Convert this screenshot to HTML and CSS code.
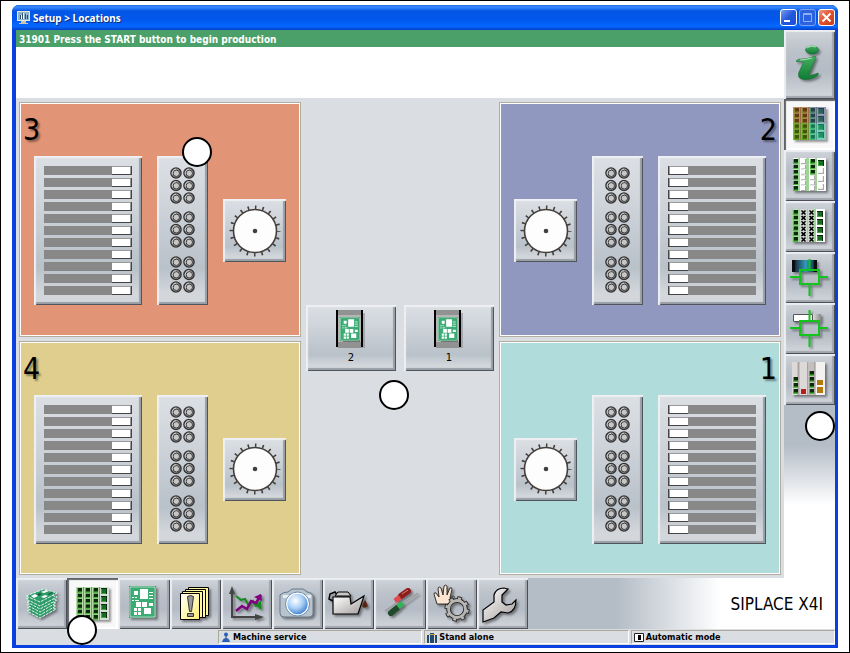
FILE: index.html
```
<!DOCTYPE html>
<html lang="en">
<head>
  <meta charset="UTF-8">
  <meta name="viewport" content="width=device-width, initial-scale=1.0">
  <title>Setup &gt; Locations</title>
  <link rel="stylesheet" href="styles.css">
</head>
<body>
  <!-- Shared drawings -->
  <svg class="defs" aria-hidden="true">
    <defs>
      <linearGradient id="metal" x1="0" y1="0" x2="1" y2="1">
        <stop offset="0" stop-color="#fff"/><stop offset="1" stop-color="#a59d9d"/>
      </linearGradient>
      <linearGradient id="teal" x1="0" x2="1">
        <stop offset="0.1" stop-color="#0a0e12"/><stop offset="0.15" stop-color="#1c3444"/><stop offset="0.55" stop-color="#2f9cc0"/><stop offset="0.85" stop-color="#1c4454"/><stop offset="0.9" stop-color="#0a0e12"/>
      </linearGradient>
      <linearGradient id="slot" x1="0" x2="1">
        <stop offset="0.6" stop-color="#fff"/><stop offset="1" stop-color="#888"/>
      </linearGradient>
      <linearGradient id="warn" x1="0" y1="0" x2="1" y2="1">
        <stop offset="0" stop-color="#fff"/><stop offset="1" stop-color="#ffef70"/>
      </linearGradient>
      <linearGradient id="green" x1="0" y1="0" x2="0" y2="1">
        <stop offset="0" stop-color="#45b060"/><stop offset="1" stop-color="#0f7a35"/>
      </linearGradient>
      <radialGradient id="lens" cx="0.4" cy="0.35" r="0.7">
        <stop offset="0" stop-color="#fff"/><stop offset="0.5" stop-color="#a9cff5"/><stop offset="1" stop-color="#2f74c8"/>
      </radialGradient>

      <symbol id="bar" viewBox="0 0 88 9">
        <path fill="#888" d="M0 0h88v9H0z"/>
        <path fill="#444" d="M68 0h20v9H68z"/>
        <path fill="#999" d="M68 0h19v8H68z"/>
        <path fill="#fff" d="M68 1h18v7H68z"/>
      </symbol>
      <symbol id="feeders" viewBox="0 0 88 129">
        <use href="#bar" width="88" height="9"/>
        <use href="#bar" width="88" height="9" y="12"/>
        <use href="#bar" width="88" height="9" y="24"/>
        <use href="#bar" width="88" height="9" y="36"/>
        <use href="#bar" width="88" height="9" y="48"/>
        <use href="#bar" width="88" height="9" y="60"/>
        <use href="#bar" width="88" height="9" y="72"/>
        <use href="#bar" width="88" height="9" y="84"/>
        <use href="#bar" width="88" height="9" y="96"/>
        <use href="#bar" width="88" height="9" y="108"/>
        <use href="#bar" width="88" height="9" y="120"/>
      </symbol>

      <symbol id="ring" viewBox="0 0 12 12">
        <circle cx="6" cy="6" r="5.100" fill="#999" stroke="#333" stroke-width="1.400"/>
        <circle cx="6.300" cy="6.300" r="3.200" fill="#c6c6c6" stroke="#3c3c3c"/>
        <path d="M2.400 7.500A4 4 0 0 1 6 2.200" fill="none" stroke="#ddd" stroke-width="0.800"/>
      </symbol>
      <symbol id="rings" viewBox="0 0 25 37">
        <use href="#ring" width="12" height="12"/>
        <use href="#ring" width="12" height="12" x="13"/>
        <use href="#ring" width="12" height="12" y="12.500"/>
        <use href="#ring" width="12" height="12" x="13" y="12.500"/>
        <use href="#ring" width="12" height="12" y="25"/>
        <use href="#ring" width="12" height="12" x="13" y="25"/>
      </symbol>
      <symbol id="nozzles" viewBox="0 0 25 127">
        <use href="#rings" width="25" height="37"/>
        <use href="#rings" width="25" height="37" y="44"/>
        <use href="#rings" width="25" height="37" y="89"/>
      </symbol>

      <symbol id="wheel" viewBox="0 0 52 52">
        <circle cx="26" cy="26" r="23.500" fill="none" stroke="#453f3c" stroke-width="4" stroke-dasharray="1.500 5.883" stroke-dashoffset="0.750"/>
        <circle cx="26" cy="26" r="21.500" fill="#fdfdfd" stroke="#453f3c" stroke-width="1.600"/>
        <circle cx="26" cy="26" r="2.300" fill="#453f3c"/>
      </symbol>

      <symbol id="board" viewBox="0 0 27 32">
        <path fill="#1f9058" d="M0 0h27v32H0z"/>
        <path fill="none" stroke="#c9eeda" d="M1 1h25v30H1z"/>
        <path fill="#3aac74" d="M2 2h23v28H2z"/>
        <path fill="#fff" d="M11 3h8v10h-8zM5 5h4v4H5zM7 16h5v5H7zM13 16h5v5h-5zM20 17h4v3h-4zM15 22h7v6h-7zM5 22h3v3H5zM9 22h3v3H9zM5 26h3v3H5zM9 26h3v3H9z"/>
        <path stroke="#fff" d="M20 6.500h4M20 9.500h4M20 12.500h4M3 11.500h2M6 11.500h2M3 14.500h2M6 14.500h4"/>
      </symbol>
      <symbol id="conveyor" viewBox="0 0 31 38">
        <path fill="#8a8d92" opacity="0.600" d="M23 3h6v35h-6z"/>
        <path fill="#929292" d="M2 0h23v38H2z"/>
        <path fill="#b5b5b5" d="M2 5h23v27H2z"/>
        <path fill="#333" opacity="0.500" d="M7 8h17v24H7z"/>
        <use href="#board" x="4" y="7" width="20" height="24"/>
        <path fill="#000" d="M0 0h2v37H0zM25 0h2v37h-2z"/>
      </symbol>

      <!-- Small and large component squares of the location grids -->
      <symbol id="s" viewBox="0 0 5 5">
        <path fill="#4fb83c" d="M0 0h5v5H0z"/><path fill="#0b2a0b" d="M1 0h4v3.500H1z"/>
      </symbol>
      <symbol id="b" viewBox="0 0 6 6">
        <path fill="#0a2a0c" d="M0 0h6v6H0z"/><path fill="#3fa93f" d="M0 1h5v5H0z"/><path fill="#176b22" d="M1 1h4v4H1z"/>
      </symbol>
      <symbol id="e" viewBox="0 0 5 5">
        <path fill="#aaa" d="M0 0h5v5H0z"/><path fill="#fff" d="M0 0h4v4H0z"/>
      </symbol>
      <symbol id="x" viewBox="0 0 5 5">
        <path stroke="#000" stroke-width="1.500" d="M.5 .5l4 4M4.500 .5l-4 4"/>
      </symbol>
      <symbol id="scol" viewBox="0 0 5 32">
        <use href="#s" width="5" height="5"/><use href="#s" width="5" height="5" y="5.400"/><use href="#s" width="5" height="5" y="10.800"/>
        <use href="#s" width="5" height="5" y="16.200"/><use href="#s" width="5" height="5" y="21.600"/><use href="#s" width="5" height="5" y="27"/>
      </symbol>
      <symbol id="ecol" viewBox="0 0 5 32">
        <use href="#e" width="5" height="5"/><use href="#e" width="5" height="5" y="5.400"/><use href="#e" width="5" height="5" y="10.800"/>
        <use href="#e" width="5" height="5" y="16.200"/><use href="#e" width="5" height="5" y="21.600"/><use href="#e" width="5" height="5" y="27"/>
      </symbol>
      <symbol id="xcol" viewBox="0 0 5 32">
        <use href="#x" width="5" height="5"/><use href="#x" width="5" height="5" y="5.400"/><use href="#x" width="5" height="5" y="10.800"/>
        <use href="#x" width="5" height="5" y="16.200"/><use href="#x" width="5" height="5" y="21.600"/><use href="#x" width="5" height="5" y="27"/>
      </symbol>
      <symbol id="bcol" viewBox="0 0 6 32">
        <use href="#b" width="6" height="6" y="1"/><use href="#b" width="6" height="6" y="9"/>
        <use href="#b" width="6" height="6" y="17"/><use href="#b" width="6" height="6" y="25"/>
      </symbol>
      <symbol id="grid" viewBox="0 0 33 33">
        <path fill="#b4d8a8" d="M0 0h33v33H0z"/>
        <path fill="#d8dcd8" d="M24 0h9v33h-9z"/>
        <path stroke="#7c927c" d="M7.500 0v33M15.500 0v33M23.500 0v33"/>
        <use href="#scol" x="1" y="1" width="5" height="32"/>
        <use href="#scol" x="9" y="1" width="5" height="32"/>
        <use href="#scol" x="17" y="1" width="5" height="32"/>
        <use href="#bcol" x="25" width="6" height="32"/>
      </symbol>
      <symbol id="target" viewBox="0 0 38 38">
        <path fill="none" stroke="#12c41c" stroke-width="2" d="M10 11h19v14H10zM19.500 0v11M19.500 25v12M0 18h10M29 18h9"/>
      </symbol>
    </defs>
  </svg>

  <div class="window">
    <header class="titlebar">
      <svg class="app-icon" viewBox="0 0 14 14" aria-hidden="true">
        <path fill="#e8e6dc" d="M0 0h13v10H0z"/>
        <path fill="#8fb4c8" d="M1 1h11v8H1z"/>
        <path fill="#2c4f78" d="M3 4h1v4H3zM5 2h1v6H5zM8 3h1v5H8zM10 4h1v4h-1z"/>
        <path fill="#fff" d="M4 4h1v4H4zM6 2h1v6H6z"/>
        <path fill="#c9c5b8" d="M4 10h5v2H4zM2 12h9v1H2z"/>
      </svg>
      <h1>Setup &gt; Locations</h1>
      <button class="win-button" aria-label="Minimize">
        <svg viewBox="0 0 15 15"><path fill="#fff" d="M3 10h6v2H3z"/></svg>
      </button>
      <button class="win-button dim" aria-label="Maximize">
        <svg viewBox="0 0 15 15"><path fill="none" stroke="#8fb0f4" d="M3.500 3.500h8v8h-8zM3 4.500h9"/></svg>
      </button>
      <button class="win-button close" aria-label="Close">
        <svg viewBox="0 0 15 15"><path stroke="#fff" stroke-width="2" d="M3.500 3.500l8 8M11.500 3.500l-8 8"/></svg>
      </button>
    </header>

    <div class="workspace">
      <div class="content">
        <p class="message">31901 Press the START button to begin production</p>
        <div class="message-space"></div>

        <main class="locations">
          <section class="location loc-3">
            <h2>3</h2>
            <div class="devices">
              <button class="bevel feeder-table" aria-label="Feeders, location 3"><svg><use href="#feeders"/></svg></button>
              <button class="bevel nozzle-changer" aria-label="Nozzle changer, location 3"><svg><use href="#nozzles"/></svg><span class="callout on-nozzles"></span></button>
              <button class="bevel head" aria-label="Placement head, location 3"><svg><use href="#wheel"/></svg></button>
            </div>
          </section>

          <div class="conveyors">
            <button class="bevel conveyor"><svg><use href="#conveyor"/></svg>2</button>
            <button class="bevel conveyor"><svg><use href="#conveyor"/></svg>1</button>
            <span class="callout on-conveyors"></span>
          </div>

          <section class="location right loc-2">
            <h2>2</h2>
            <div class="devices">
              <button class="bevel feeder-table" aria-label="Feeders, location 2"><svg><use href="#feeders"/></svg></button>
              <button class="bevel nozzle-changer" aria-label="Nozzle changer, location 2"><svg><use href="#nozzles"/></svg></button>
              <button class="bevel head" aria-label="Placement head, location 2"><svg><use href="#wheel"/></svg></button>
            </div>
          </section>

          <section class="location loc-4">
            <h2>4</h2>
            <div class="devices">
              <button class="bevel feeder-table" aria-label="Feeders, location 4"><svg><use href="#feeders"/></svg></button>
              <button class="bevel nozzle-changer" aria-label="Nozzle changer, location 4"><svg><use href="#nozzles"/></svg></button>
              <button class="bevel head" aria-label="Placement head, location 4"><svg><use href="#wheel"/></svg></button>
            </div>
          </section>

          <section class="location right loc-1">
            <h2>1</h2>
            <div class="devices">
              <button class="bevel feeder-table" aria-label="Feeders, location 1"><svg><use href="#feeders"/></svg></button>
              <button class="bevel nozzle-changer" aria-label="Nozzle changer, location 1"><svg><use href="#nozzles"/></svg></button>
              <button class="bevel head" aria-label="Placement head, location 1"><svg><use href="#wheel"/></svg></button>
            </div>
          </section>
        </main>
      </div>

      <aside class="sidebar">
        <button class="tool info" aria-label="Information">
          <svg viewBox="0 0 51 69">
            <g fill="url(#green)" stroke="#0c6a2c" stroke-width="0.500">
              <ellipse cx="28" cy="20" rx="6.500" ry="4"/>
              <path d="M12 31c1-1 2-2 5-2 5 0 9-1 14-3l1 1-6 15c-1 3 0 4 2 3l6-2c1 1 0 2-1 3-4 3-10 4-15 3-4-1-4-4-3-7l4-9c0-2-1-2-6-1z"/>
            </g>
            <path d="M23 18c2-2 6-2 9-1M16 30c4 0 8-1 12-2" fill="none" stroke="#9fdcae" stroke-width="1.200"/>
          </svg>
        </button>
        <button class="tool active" aria-label="All locations">
          <svg viewBox="0 0 51 51">
            <use href="#grid" x="9" y="8" width="33" height="33"/>
            <g opacity="0.500">
              <path fill="#c2481c" d="M9 8h16v16H9z"/><path fill="#4a5494" d="M25 8h17v16H25z"/>
              <path fill="#788000" d="M9 24h16v17H9z"/><path fill="#2cb8a8" d="M25 24h17v17H25z"/>
            </g>
          </svg>
        </button>
        <button class="tool" aria-label="Free tracks">
          <svg viewBox="0 0 51 51">
            <path fill="#fff" d="M9 8h33v33H9z"/>
            <path fill="#9fd39a" d="M14 8h2v33h-2zM22 8h3v33h-3zM31 8h2v33h-2z"/>
            <use href="#scol" x="9" y="9" width="5" height="32"/>
            <use href="#ecol" x="17" y="9" width="5" height="32"/>
            <use href="#ecol" x="26" y="9" width="5" height="32"/>
            <use href="#s" x="26" y="9" width="5" height="5"/>
            <use href="#s" x="26" y="14.400" width="5" height="5"/>
            <use href="#s" x="26" y="19.800" width="5" height="5"/>
            <use href="#b" x="34" y="10" width="6" height="6"/>
            <use href="#e" x="34" y="18" width="6" height="6"/>
            <use href="#e" x="34" y="26" width="6" height="6"/>
            <use href="#e" x="34" y="34" width="6" height="6"/>
          </svg>
        </button>
        <button class="tool" aria-label="Disabled tracks">
          <svg viewBox="0 0 51 51">
            <path fill="#d0d6d0" d="M8 8h33v33H8z"/>
            <path fill="#fff" d="M32 8h9v33h-9z"/>
            <path fill="#9fd39a" d="M8 8h1v33H8zM14 8h2v33h-2zM23 8h1v33h-1zM30 8h2v33h-2z"/>
            <use href="#scol" x="9" y="9" width="5" height="32"/>
            <use href="#xcol" x="17" y="9" width="5" height="32"/>
            <use href="#xcol" x="25" y="9" width="5" height="32"/>
            <use href="#bcol" x="33" y="9" width="6" height="32"/>
          </svg>
        </button>
        <button class="tool" aria-label="Component position">
          <svg viewBox="0 0 51 51">
            <path fill="url(#teal)" d="M8 8h25v12H8z"/>
            <use href="#target" x="6" y="7" width="38" height="38"/>
          </svg>
        </button>
        <button class="tool" aria-label="Track position">
          <svg viewBox="0 0 51 51">
            <path fill="url(#slot)" d="M9 11h28v8H9z"/>
            <path fill="none" stroke="#555" d="M9.500 11.500h19v7h-19z"/>
            <use href="#target" x="6" y="7" width="38" height="38"/>
          </svg>
        </button>
        <button class="tool" aria-label="Fill levels">
          <svg viewBox="0 0 51 51">
            <path fill="#c4bfbe" d="M8 8h33v33H8z"/>
            <path fill="#dcd9d8" d="M8 8h5v33H8zM16 8h7v33h-7z"/>
            <path fill="#f4f2f0" d="M32 8h9v33h-9z"/>
            <path fill="#a9a3a2" d="M14 8h1v33h-1zM23 8h1v33h-1zM30 8h1v33h-1z"/>
            <use href="#s" x="9" y="23" width="5" height="5"/><use href="#s" x="9" y="29" width="5" height="5"/><use href="#s" x="9" y="35" width="5" height="5"/>
            <path fill="#b91c1c" d="M17 35h5v5h-5z"/>
            <use href="#s" x="25" y="17" width="5" height="5"/><use href="#s" x="25" y="23" width="5" height="5"/><use href="#s" x="25" y="29" width="5" height="5"/><use href="#s" x="25" y="35" width="5" height="5"/>
            <path fill="#b57a0c" d="M33 26h6v5h-6zM33 33h6v6h-6z"/>
          </svg>
        </button>
        <span class="callout on-sidebar"></span>
      </aside>
    </div>

    <footer>
      <nav class="toolbar">
        <div class="tools">
          <button class="tool" aria-label="Boards">
            <svg viewBox="0 0 51 51">
              <g fill="#2f9b6b" stroke="#dff3e8" stroke-dasharray="3 1">
                <path d="M11 33l16-7 13 5-16 9z"/>
                <path d="M11 30l16-7 13 5-16 9z"/>
                <path d="M11 27l16-7 13 5-16 9z"/>
                <path d="M11 24l16-7 14 5-17 9z"/>
                <path d="M10 21l17-7 14 5-17 9z"/>
                <path d="M10 18l18-7 13 4-17 9z"/>
              </g>
              <path fill="#fff" d="M25 14l5-2 3 1-5 2zM15 18l4-2 3 2-4 2zM25 19l4-2 3 1-4 2z"/>
              <path fill="#14603c" d="M21 16l3-1 2 1-3 2zM32 16l4-2 1 1-4 2z"/>
            </svg>
          </button>
          <button class="tool active" aria-label="Locations">
            <svg viewBox="0 0 51 51"><use href="#grid" x="9" y="9" width="33" height="33"/></svg>
            <span class="callout on-tool"></span>
          </button>
          <button class="tool" aria-label="Board">
            <svg viewBox="0 0 51 51"><use href="#board" x="11" y="8" width="27" height="32"/></svg>
          </button>
          <button class="tool" aria-label="Messages">
            <svg viewBox="0 0 51 51">
              <path fill="#fff6a0" stroke="#000" d="M18.500 9.500h20v28h-20z"/>
              <path fill="#fff6a0" stroke="#000" d="M15.500 11.500h20v28h-20z"/>
              <path fill="#fff6a0" stroke="#000" d="M12.500 13.500h20v26h-20z"/>
              <path fill="url(#warn)" stroke="#000" d="M10.500 15.500h19v26h-19z"/>
              <path fill="#9a9a9a" stroke="#333" d="M17.500 18.500q3-2 6 0l-2 15h-2zM17.500 35.500h6v3h-6z"/>
            </svg>
          </button>
          <button class="tool" aria-label="Statistics">
            <svg viewBox="0 0 51 51">
              <path fill="none" stroke="#444" stroke-width="2" d="M11 14v25h26"/>
              <path fill="#444" d="M11 8l3 8H8zM43 39l-9-3v6z"/>
              <path fill="none" stroke="#168a1c" stroke-width="2" d="M15 18l5 4 4-1 4 7 4-5 3 5 5-1"/>
              <path fill="#168a1c" d="M34 26l6-3v9z"/>
              <path fill="none" stroke="#800080" stroke-width="2.500" d="M15 33l6-5 5 3 4-8 5 2 5-8"/>
              <path fill="#800080" d="M33 19l7-3 1 7z"/>
            </svg>
          </button>
          <button class="tool" aria-label="Vision">
            <svg viewBox="0 0 51 51">
              <path fill="#b9c3ce" stroke="#66788a" d="M8 17q3-3 8-3l4-3h11l4 3q5 0 6 4v18q-1 3-4 3H12q-4 0-4-4z"/>
              <path fill="#e8edf2" d="M11 17h7l3-3h9l3 3h6v3H11z"/>
              <circle cx="25.500" cy="26" r="11" fill="url(#lens)" stroke="#fff" stroke-width="1.500"/>
              <circle cx="25.500" cy="26" r="12" fill="none" stroke="#6d8fb5"/>
            </svg>
          </button>
          <button class="tool" aria-label="Maintenance">
            <svg viewBox="0 0 51 51">
              <path fill="none" stroke="#000" stroke-width="1.500" d="M10 23l-4-2 1-5 5-2 3 4"/>
              <path fill="#c8c8c8" stroke="#000" d="M12 18l3-4h10l3 4z"/>
              <path fill="url(#metal)" stroke="#000" stroke-width="1.200" d="M10 19h17l1 7 13-8-6 18H10z"/>
              <path fill="#5a2413" d="M42 22q4 6 2 7-4 2-5-1 1-3 3-6z"/>
            </svg>
          </button>
          <button class="tool" aria-label="Service tools">
            <svg viewBox="0 0 51 51">
              <path stroke="#999" stroke-width="1.500" d="M11 33l13-9M29 26l15-11"/>
              <path stroke="#8e1d1d" stroke-width="6" stroke-linecap="round" d="M27 18l7-5"/>
              <path stroke="#e04a4a" stroke-width="5" d="M21 23l5-4"/>
              <path stroke="#1e4a2a" stroke-width="6" stroke-linecap="round" d="M17 35l6-5"/>
              <path stroke="#35b35a" stroke-width="5" d="M24 29l5-4"/>
              <path stroke="#d98080" d="M28 16l6-4"/>
            </svg>
          </button>
          <button class="tool" aria-label="Manual functions">
            <svg viewBox="0 0 51 51">
              <path fill="#fbe5d0" stroke="#222" stroke-width="0.900" d="M11 26l-3-10q0-2 2-1l3 4-1-9q1-2 3 0l2 7 1-9q2-2 3 0v9l3-7q2-1 2 1l-2 9 3-2q2 0 1 2l-6 6z"/>
              <circle cx="31" cy="31" r="10.400" fill="none" stroke="#222" stroke-width="4.500" stroke-dasharray="4.200 3.970"/>
              <circle cx="31" cy="31" r="8.500" fill="none" stroke="#222" stroke-width="4.500"/>
              <circle cx="31" cy="31" r="10" fill="none" stroke="#b9b5b3" stroke-width="3.500" stroke-dasharray="2.800 5.054" stroke-dashoffset="-0.700"/>
              <circle cx="31" cy="31" r="8.500" fill="none" stroke="#b9b5b3" stroke-width="2.800"/>
            </svg>
          </button>
          <button class="tool" aria-label="Options">
            <svg viewBox="0 0 51 51">
              <path fill="url(#metal)" stroke="#000" stroke-width="1.200" d="M6 44V32l11-8V17q2-7 10-7l4 1-6 6v7l4 3 6-1 4-4q0 11-8 13l-7-1-7 6z"/>
            </svg>
          </button>
        </div>
        <div class="machine-name">SIPLACE X4I</div>
      </nav>

      <div class="statusbar">
        <div class="status-cell">
          <svg viewBox="0 0 10 11"><circle cx="5" cy="2.500" r="2" fill="#2c5fb8"/><path stroke="#345" d="M5 4v4"/><path fill="#2c5fb8" d="M1 10q1-4 4-4t4 4z"/></svg>
          Machine service
        </div>
        <div class="status-cell">
          <svg viewBox="0 0 10 11"><path fill="#234a6b" d="M0 3h2v8H0zM3 1h4v10H3zM8 3h2v8H8z"/><path fill="#d8a640" d="M2 2h6v1H2z"/></svg>
          Stand alone
        </div>
        <div class="status-cell">
          <svg viewBox="0 0 10 11"><path fill="#fff" stroke="#222" d="M.5 1.500h9v8h-9z"/><path fill="#000" d="M4 3h3v5H4z"/></svg>
          Automatic mode
        </div>
      </div>
    </footer>
  </div>
</body>
</html>
```
FILE: styles.css
```
/* Base */
* {
  box-sizing: border-box;
}

body, h1, h2, p {
  margin: 0;
}

body {
  min-height: 100vh;
  display: flex;
  padding: 4px 11px;
  border: 1px solid #000;
  background: #fff;
  color: #000;
  font-family: "DejaVu Sans Condensed", "DejaVu Sans", Verdana, sans-serif;
  font-size: 10px;
}

button {
  position: relative;
  margin: 0;
  padding: 0;
  border: none;
  color: inherit;
  font: inherit;
}

svg {
  display: block;
}

.defs {
  position: absolute;
  width: 0;
  height: 0;
}

/* Window */
.window {
  flex: 1;
  display: flex;
  flex-direction: column;
  border: solid #0a3fe0;
  border-width: 0 3px 3px 4px;
  border-radius: 7px 7px 0 0;
  background: #0a3fe0;
}

.titlebar {
  display: flex;
  align-items: center;
  gap: 2px;
  height: 25px;
  margin: 0 -3px 0 -4px;
  padding: 0 3px 0 5px;
  border-radius: 7px 7px 0 0;
  background: linear-gradient(#2a6ad8, #3a8cff 2px, #0455e4 6px, #0258ee 60%, #0668ff 85%, #0340cc);
}

.app-icon {
  width: 14px;
  height: 14px;
}

.titlebar h1 {
  flex: 1;
  color: #fff;
  font-family: "Noto Sans", "Open Sans", sans-serif;
  font-size: 10px;
  text-shadow: 1px 1px 0 #0a2a80;
}

.win-button {
  width: 17px;
  height: 17px;
  border: 1px solid #fff;
  border-radius: 3px;
  background: linear-gradient(135deg, #7a9df0, #2458dc 50%, #1c4fd8);
}

.win-button svg {
  width: 15px;
  height: 15px;
}

.win-button.dim {
  border-color: #7fa0ee;
  background: #2a62e0;
}

.win-button.close {
  background: linear-gradient(135deg, #f09a80, #e0502c 50%, #c83c14);
}

/* Main area */
.workspace {
  flex: 1;
  display: grid;
  grid-template-columns: 1fr 51px;
  background: #dadde2;
}

.content {
  display: flex;
  flex-direction: column;
}

.message {
  height: 17px;
  padding-left: 3px;
  background: #4b9f68;
  color: #fff;
  font-weight: bold;
  line-height: 19px;
}

.message-space {
  height: 51px;
  background: #fff;
}

.locations {
  flex: 1;
  display: grid;
  grid-template-columns: 282fr 198fr 282fr;
  grid-template-rows: 1fr 1fr;
  row-gap: 4px;
  padding: 4px 3px 3px;
}

.location {
  border: 1px solid #b3ad9f;
  box-shadow: inset 0 0 0 1px #fff;
}

.location h2 {
  padding: 0 3px;
  font-size: 30px;
  font-weight: normal;
  line-height: 53px;
  text-shadow: 2px 2px 2px rgba(0, 0, 0, 0.4);
}

.loc-3 {
  background: #e29476;
}

.loc-2 {
  background: #9098c0;
}

.loc-4 {
  background: #e0ce8e;
}

.loc-1 {
  background: #b0dcdc;
}

.devices {
  display: flex;
  justify-content: center;
  align-items: center;
  gap: 15px;
}

.right h2 {
  text-align: right;
}

.right .devices {
  flex-direction: row-reverse;
}

.right .feeder-table svg {
  transform: scaleX(-1);
}

/* Raised device buttons */
.bevel {
  display: flex;
  justify-content: center;
  align-items: center;
  background: linear-gradient(#dce0e5, #d0d5db 30%, #b9c1c9 75%, #d3d7dc 92%);
  box-shadow: inset 2px 2px 1px #eef0f3, inset -1px -1px 0 #50555c, inset -3px -3px 1px #989ea6;
}

.feeder-table {
  width: 108px;
  height: 149px;
}

.feeder-table svg {
  width: 88px;
  height: 129px;
}

.nozzle-changer {
  width: 51px;
  height: 149px;
}

.nozzle-changer svg {
  width: 25px;
  height: 127px;
}

.head {
  width: 63px;
  height: 63px;
}

.head svg {
  width: 52px;
  height: 52px;
}

/* Conveyor lanes */
.conveyors {
  grid-row: 1 / 3;
  grid-column: 2;
  position: relative;
  display: flex;
  justify-content: center;
  align-items: center;
  gap: 8px;
  padding-bottom: 2px;
}

.conveyor {
  flex-direction: column;
  justify-content: flex-start;
  gap: 4px;
  width: 90px;
  height: 66px;
  padding-top: 5px;
  font-family: "DejaVu Sans", Verdana, sans-serif;
  line-height: 12px;
}

.conveyor svg {
  width: 31px;
  height: 38px;
}

/* Tool buttons */
.tool {
  display: block;
  height: 51px;
  background: linear-gradient(#d0d4da, #bcc2ca 30%, #b4bbc4 60%, #d4d8dd);
  box-shadow: inset 2px 2px 1px #eceef1, inset -1px -1px 0 #4c5056, inset -3px -3px 1px #a0a6ae;
}

.tool svg {
  width: 51px;
  height: 51px;
  filter: drop-shadow(2px 2px 1px rgba(0, 0, 0, 0.4));
}

.tool.active {
  background: #f8f8f9;
  box-shadow: inset 2px 2px 1px #606468, inset -2px -2px 1px #fff;
}

.sidebar {
  position: relative;
  display: flex;
  flex-direction: column;
  background: linear-gradient(#b4bcc6 415px, #fff 475px);
}

.tool.info,
.tool.info svg {
  height: 69px;
}

.toolbar {
  display: flex;
  justify-content: space-between;
  align-items: center;
  background: linear-gradient(90deg, #b4bcc6 600px, #fff 705px);
}

.tools {
  display: grid;
  grid-template-columns: repeat(10, 1fr);
  width: 512px;
}

.machine-name {
  padding-right: 12px;
  font-size: 17px;
}

/* Status bar */
.statusbar {
  display: grid;
  grid-template-columns: repeat(3, 1fr);
  gap: 2px;
  height: 16px;
  padding: 1px 0 1px 202px;
  background: #dadde2;
}

.status-cell {
  display: flex;
  align-items: center;
  gap: 2px;
  padding-left: 2px;
  border: 1px solid;
  border-color: #aca899 #fff #fff #aca899;
  font-size: 9px;
  font-weight: bold;
}

.status-cell svg {
  width: 10px;
  height: 11px;
}

/* Blank callout markers */
.callout {
  position: absolute;
  z-index: 1;
  width: 30px;
  height: 30px;
  border: 2px solid #000;
  border-radius: 50%;
  background: #fff;
}

.on-nozzles {
  top: -19px;
  right: -4px;
}

.on-conveyors {
  top: calc(50% + 41px);
  left: calc(50% - 21px);
}

.on-sidebar {
  top: 381px;
  right: 0;
}

.on-tool {
  top: 37px;
  left: 0;
}
```
